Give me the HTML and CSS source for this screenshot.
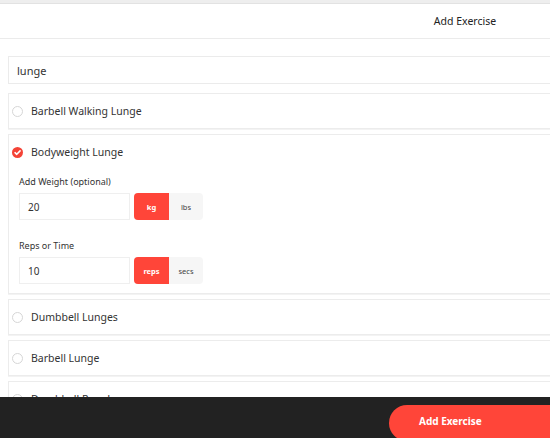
FILE: index.html
```html
<!DOCTYPE html>
<html lang="en">
<head>
    <meta charset="UTF-8">
    <title>Add Exercise</title>
    <link rel="stylesheet" href="styles.css">
</head>
<body>
    <div class="page">
        <div class="topbar"></div>
        <div class="header">Add Exercise</div>

        <div class="content">
            <div class="search">lunge</div>

            <div class="card">
                <div class="row"><span class="radio"></span>Barbell Walking Lunge</div>
            </div>

            <div class="card">
                <div class="row">
                    <svg class="check" width="11" height="11" viewBox="0 0 12 12">
                        <circle cx="6" cy="6" r="6" fill="#f44336"/>
                        <path d="M3.3 6.2 L5.2 8 L8.8 4.2" fill="none" stroke="#fff" stroke-width="1.7" stroke-linecap="round" stroke-linejoin="round"/>
                    </svg>
                    Bodyweight Lunge
                </div>
                <div class="options">
                    <div class="field">
                        <div class="label">Add Weight (optional)</div>
                        <div class="inputs">
                            <div class="input">20</div>
                            <div class="toggle">
                                <span class="opt active">kg</span>
                                <span class="opt">lbs</span>
                            </div>
                        </div>
                    </div>
                    <div class="field">
                        <div class="label">Reps or Time</div>
                        <div class="inputs">
                            <div class="input">10</div>
                            <div class="toggle">
                                <span class="opt active">reps</span>
                                <span class="opt">secs</span>
                            </div>
                        </div>
                    </div>
                </div>
            </div>

            <div class="card">
                <div class="row"><span class="radio"></span>Dumbbell Lunges</div>
            </div>
            <div class="card">
                <div class="row"><span class="radio"></span>Barbell Lunge</div>
            </div>
            <div class="card">
                <div class="row"><span class="radio"></span>Dumbbell Rear Lunge</div>
            </div>
        </div>

        <div class="footer">
            <button class="add-btn">Add Exercise</button>
        </div>
    </div>
</body>
</html>
```

FILE: styles.css
```css
* {
    margin: 0;
    padding: 0;
    box-sizing: border-box;
}

html, body {
    overflow: hidden;
    height: 100%;
}

body {
    font-family: 'Noto Sans', sans-serif;
    color: #333;
    background: #fff;
}

.page {
    width: 930px;
    height: 438px;
    position: relative;
}

.topbar {
    height: 4px;
    background: #eeeeee;
    border-bottom: 1px solid #e2e2e2;
}

.header {
    height: 35px;
    border-bottom: 1px solid #ebebeb;
    display: flex;
    align-items: center;
    justify-content: center;
    font-size: 10.5px;
    color: #222;
}

.content {
    padding: 17px 8px 0;
}

.search {
    height: 28px;
    border: 1px solid #ebebeb;
    padding-left: 8px;
    display: flex;
    align-items: center;
    font-size: 11px;
    margin-bottom: 9px;
}

.card {
    border: 1px solid #ececec;
    box-shadow: 0 1px 0 #f3f3f3;
    margin-bottom: 5px;
}

.row {
    height: 34px;
    display: flex;
    align-items: center;
    padding-left: 3px;
    font-size: 10.5px;
    color: #333;
}

.radio {
    width: 11px;
    height: 11px;
    border: 1px solid #d6d6d6;
    border-radius: 50%;
    margin-right: 8px;
}

.check {
    margin-right: 8px;
}

.options {
    padding: 0 10px 9px;
}

.field {
    margin-top: 6px;
}

.field + .field {
    margin-top: 19px;
}

.label {
    font-size: 9px;
    color: #333;
    margin-bottom: 5px;
}

.inputs {
    display: flex;
    gap: 4px;
}

.input {
    width: 111px;
    height: 27px;
    border: 1px solid #efefef;
    display: flex;
    align-items: center;
    padding-left: 8px;
    font-size: 10px;
}

.toggle {
    display: flex;
    border-radius: 4px;
    overflow: hidden;
    background: #f6f6f6;
}

.opt {
    width: 34px;
    height: 27px;
    display: flex;
    align-items: center;
    justify-content: center;
    font-size: 7.5px;
    color: #444;
}

.opt.active {
    background: #ff4539;
    color: #fff;
    font-weight: 700;
    width: 35px;
}

.footer {
    position: absolute;
    left: 0;
    right: 0;
    top: 397px;
    height: 41px;
    background: #222;
}

.add-btn {
    position: absolute;
    left: 389px;
    top: 8px;
    width: 200px;
    height: 36px;
    border: none;
    border-radius: 18px;
    background: #ff4539;
    color: #fff;
    font-family: 'Noto Sans', sans-serif;
    font-weight: 700;
    font-size: 10px;
    text-align: left;
    padding-left: 30px;
    padding-bottom: 4px;
}
```
